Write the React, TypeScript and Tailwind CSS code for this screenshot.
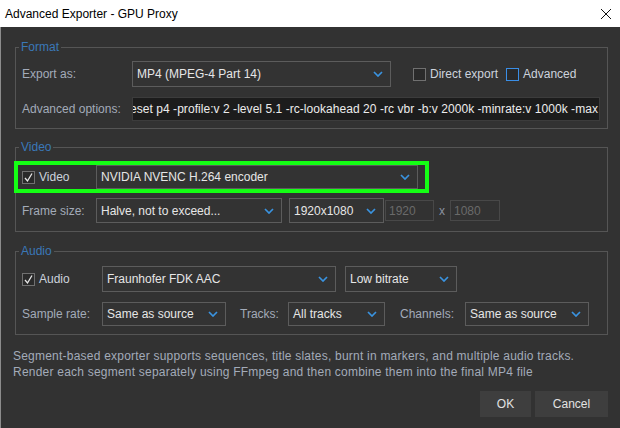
import React from "react";

const Chevron = () => (
  <svg width="10" height="6" viewBox="0 0 10 6" className="shrink-0">
    <polyline points="1,1 5,5 9,1" fill="none" stroke="#3a93e0" strokeWidth="1.7" />
  </svg>
);

const Check = () => (
  <svg width="11" height="11" viewBox="0 0 11 11">
    <polyline points="2,6 4.5,9 9,1.5" fill="none" stroke="#e8e8e8" strokeWidth="1.3" />
  </svg>
);

function Select({ value, w, h = "h-[26px]" }: { value: string; w: string; h?: string }) {
  return (
    <div
      className={`${w} ${h} shrink-0 flex items-center justify-between border border-[#5c5c5c] bg-[#333333] pl-[4px] pr-[7px] text-[#e6e6e6]`}
    >
      <span className="whitespace-nowrap">{value}</span>
      <Chevron />
    </div>
  );
}

function CheckBox({ checked, blue }: { checked?: boolean; blue?: boolean }) {
  return (
    <div
      className={`w-[13px] h-[13px] shrink-0 flex items-center justify-center border ${
        blue ? "border-[#3a8ee6]" : "border-[#707070]"
      } bg-[#2a2a2a]`}
    >
      {checked && <Check />}
    </div>
  );
}

function Group({ title, className, children }: { title: string; className?: string; children: React.ReactNode }) {
  return (
    <div className={`relative border border-[#555555] ${className ?? ""}`}>
      <span className="absolute left-[3px] top-[-9px] px-[2px] bg-[#323232] leading-[16px] text-[#3a78b8]">
        {title}
      </span>
      {children}
    </div>
  );
}

export default function App() {
  return (
    <div className="w-[620px] h-[428px] flex flex-col overflow-hidden font-['Liberation_Sans',Arial,sans-serif] text-[12px]">
      <div className="h-[27px] shrink-0 bg-white flex items-center justify-between pl-[5px] pr-[8px] text-black">
        <span>Advanced Exporter - GPU Proxy</span>
        <svg width="12" height="12" viewBox="0 0 12 12">
          <path d="M1 1 L11 11 M11 1 L1 11" stroke="#111" strokeWidth="1" />
        </svg>
      </div>
      <div className="flex-1 flex flex-col bg-[#323232] border-l border-[#8c8c8c] pl-[14px] pr-[12px] pt-[20px] text-[#a3abb9]">
        <Group title="Format" className="h-[82px] pt-[13px] px-[6px] flex flex-col gap-[10px]">
          <div className="flex items-center h-[26px]">
            <span className="w-[110px] shrink-0">Export as:</span>
            <Select value="MP4 (MPEG-4 Part 14)" w="w-[259px]" />
            <div className="ml-[22px] flex items-center gap-[4px] text-[#cdd3dd]">
              <CheckBox />
              <span>Direct export</span>
            </div>
            <div className="ml-[8px] flex items-center gap-[4px] text-[#cdd3dd]">
              <CheckBox blue />
              <span>Advanced</span>
            </div>
          </div>
          <div className="flex items-center h-[24px]">
            <span className="w-[110px] shrink-0">Advanced options:</span>
            <div className="w-[468px] h-[24px] flex items-center overflow-hidden border border-[#3c3c3c] bg-[#1c1c1c] text-[#ececec]">
              <span className="whitespace-nowrap ml-[-3px] tracking-[0.05px]">
                eset p4 -profile:v 2 -level 5.1 -rc-lookahead 20 -rc vbr -b:v 2000k -minrate:v 1000k -max
              </span>
            </div>
          </div>
        </Group>

        <Group title="Video" className="mt-[18px] h-[85px] pt-[13px] px-[6px] flex flex-col">
          <div className="ml-[-8px] w-[415px] h-[32px] border-4 border-[#14ff14] flex items-center pl-[4px]">
            <CheckBox checked />
            <span className="ml-[4px] w-[57px] text-[#cdd3dd]">Video</span>
            <Select value="NVIDIA NVENC H.264 encoder" w="w-[322px]" h="h-[24px]" />
          </div>
          <div className="mt-[5px] flex items-center h-[25px]">
            <span className="w-[74px] shrink-0">Frame size:</span>
            <Select value="Halve, not to exceed..." w="w-[186px]" h="h-[25px]" />
            <div className="ml-[7px]">
              <Select value="1920x1080" w="w-[95px]" h="h-[25px]" />
            </div>
            <div className="ml-[1px] w-[49px] h-[21px] border border-[#484848] flex items-center pl-[3px] text-[#6a6a6a]">
              1920
            </div>
            <span className="mx-[5px] text-[#8a92a0]">x</span>
            <div className="w-[50px] h-[21px] border border-[#484848] flex items-center pl-[3px] text-[#6a6a6a]">
              1080
            </div>
          </div>
        </Group>

        <Group title="Audio" className="mt-[19px] h-[84px] pt-[14px] px-[6px] flex flex-col">
          <div className="flex items-center h-[26px]">
            <CheckBox checked />
            <span className="ml-[4px] w-[63px] text-[#cdd3dd]">Audio</span>
            <Select value="Fraunhofer FDK AAC" w="w-[234px]" />
            <div className="ml-[9px]">
              <Select value="Low bitrate" w="w-[112px]" />
            </div>
          </div>
          <div className="mt-[10px] flex items-center h-[24px]">
            <span className="w-[80px] shrink-0">Sample rate:</span>
            <Select value="Same as source" w="w-[124px]" h="h-[24px]" />
            <span className="ml-[14px] w-[48px] shrink-0">Tracks:</span>
            <Select value="All tracks" w="w-[97px]" h="h-[24px]" />
            <span className="ml-[15px] w-[65px] shrink-0">Channels:</span>
            <Select value="Same as source" w="w-[124px]" h="h-[24px]" />
          </div>
        </Group>

        <div className="mt-[13px] ml-[-2px] leading-[16px] tracking-[0.22px]">
          <div>Segment-based exporter supports sequences, title slates, burnt in markers, and multiple audio tracks.</div>
          <div>Render each segment separately using FFmpeg and then combine them into the final MP4 file</div>
        </div>

        <div className="mt-[11px] flex justify-end gap-[4px] text-[#e2e2e2]">
          <div className="w-[51px] h-[26px] bg-[#3e3e3e] flex items-center justify-center">OK</div>
          <div className="w-[73px] h-[26px] bg-[#3e3e3e] flex items-center justify-center">Cancel</div>
        </div>
      </div>
    </div>
  );
}
